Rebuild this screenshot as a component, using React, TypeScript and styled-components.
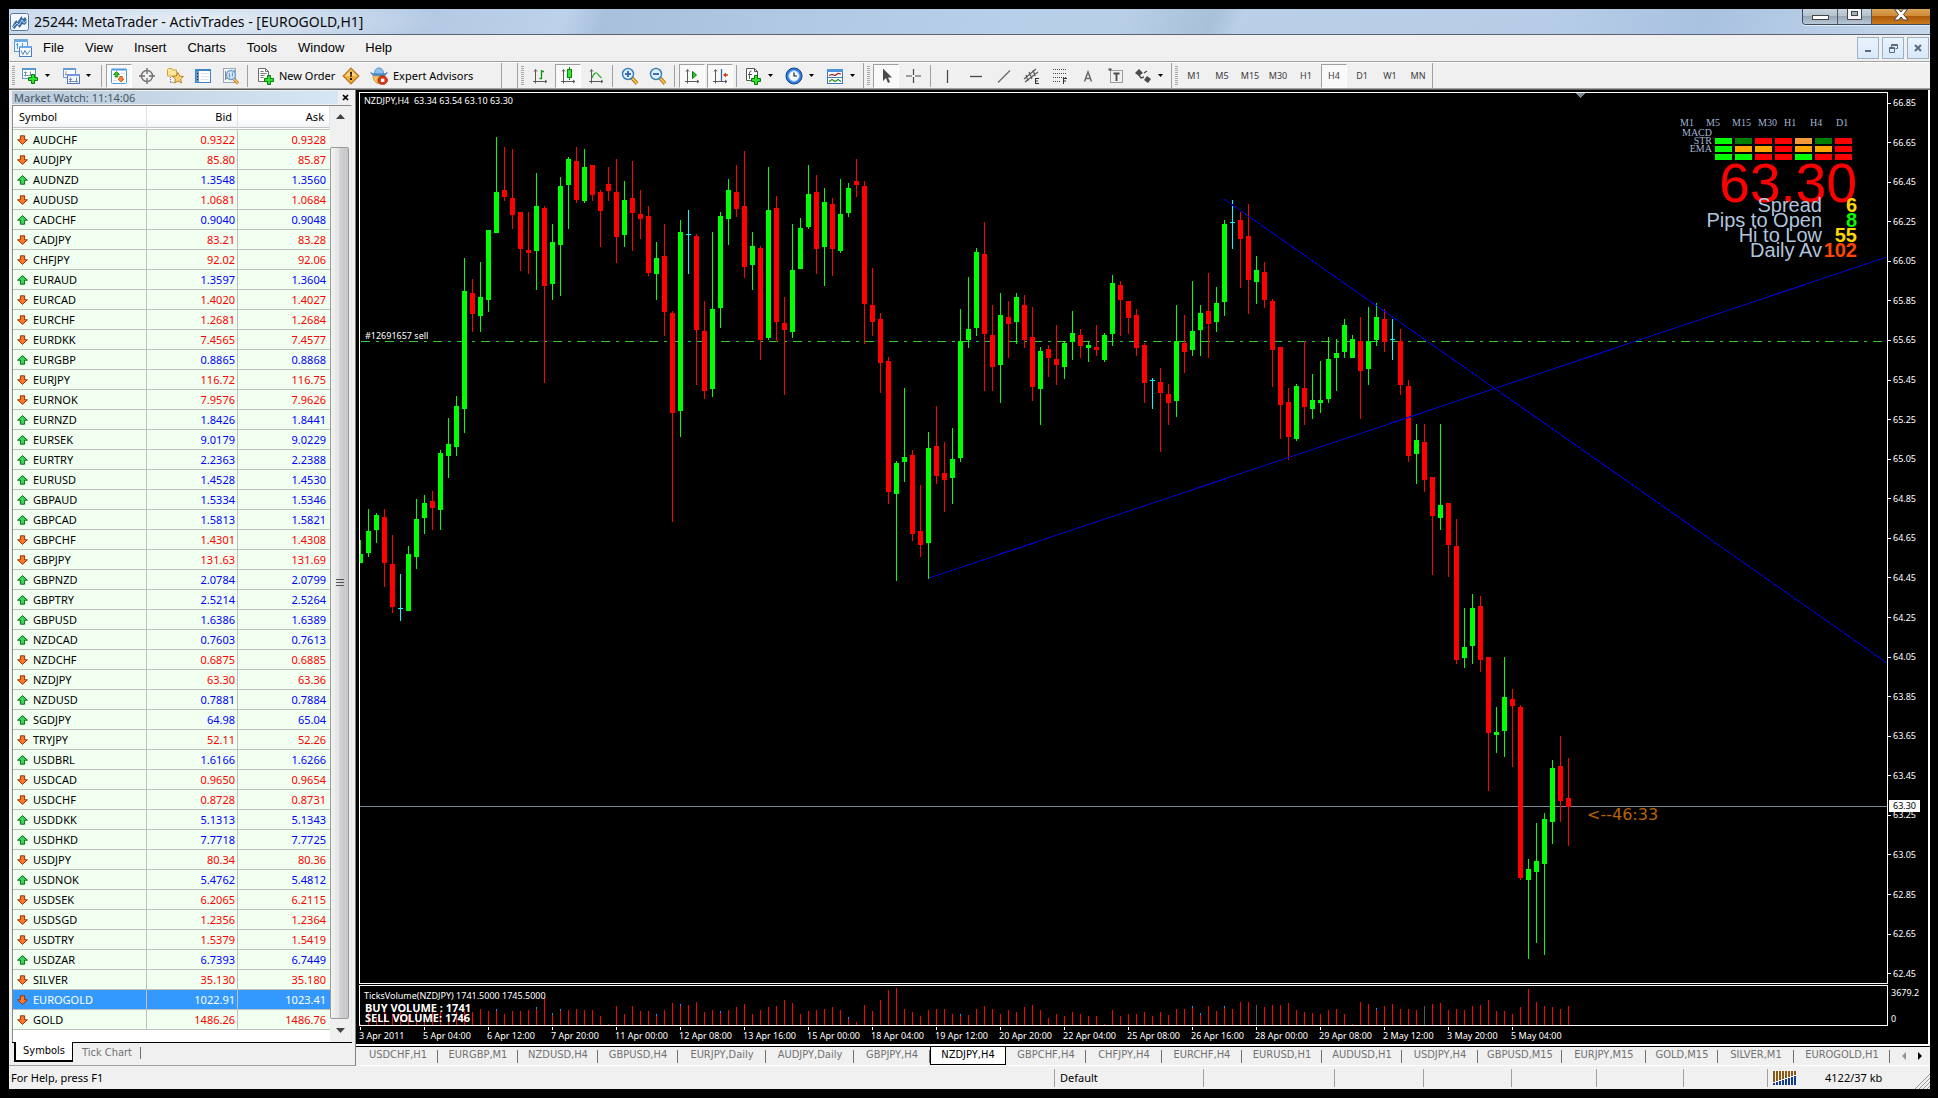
import React from "react";
import styled, { createGlobalStyle, css } from "styled-components";

const UI = `"Noto Sans", "Open Sans", sans-serif`;
const COND = `"DejaVu Sans Condensed", "Noto Sans", sans-serif`;
const ARIAL = `"Liberation Sans", Arial, sans-serif`;
const FACE = "#f0f0f0";
const SHADE = "#a0a0a0";

const GlobalStyle = createGlobalStyle`
  * { box-sizing: border-box; }
  body { margin: 0; background: #000; font-family: ${UI}; font-size: 11px; color: #000; }
  button { font: inherit; color: inherit; background: none; border: 0; padding: 0; margin: 0; }
`;

/* ---------- window frame ---------- */

const Screen = styled.div`
  min-height: 100vh;
  display: flex;
  padding: 9px 8px 9px 9px;
`;
const AppWindow = styled.main`
  flex: 1;
  min-width: 0;
  display: flex;
  flex-direction: column;
  background: ${FACE};
`;
const TitleBar = styled.header`
  height: 26px;
  display: flex;
  align-items: center;
  padding-left: 1px;
  gap: 5px;
  border-bottom: 1px solid #5b6472;
  background:
    radial-gradient(ellipse 240px 30px at 190px 12px, rgba(255, 255, 255, 0.65), rgba(255, 255, 255, 0) 100%),
    linear-gradient(110deg, #c3d5ea 0, #b4cae4 22%, #bcd1ea 29%, #a9c0dc 31%, #b1c8e3 40%, #b8cfe9 52%,
      #b9cfe8 58%, #a9c0d9 62.5%, #bacfe8 64%, #b7cde7 80%, #a9c2e0 88%, #c5d7eb 100%);
`;
const TitleText = styled.h1`
  flex: 1;
  margin: 0;
  font: 400 14px/20px ${UI};
  color: #0a0a0a;
`;
const Captions = styled.div`
  align-self: flex-start;
  display: flex;
  height: 16px;
  border: 1px solid #3d4a5c;
  border-top: 0;
  border-right: 0;
  border-radius: 0 0 0 4px;
  overflow: hidden;
  box-shadow: 0 1px 0 #e4eefa;
`;
const Caption = styled.button<{ $w: number; $close?: boolean }>`
  width: ${(p) => p.$w}px;
  display: flex;
  justify-content: center;
  border-right: 1px solid ${(p) => (p.$close ? "transparent" : "#4d5a6c")};
  background: ${(p) =>
    p.$close
      ? "linear-gradient(#d9a45a 0, #d08a35 45%, #ad5a08 50%, #c97a1c 100%)"
      : "linear-gradient(#c6d2de 0, #b4c3cf 45%, #95a7b5 50%, #b9c8d8 100%)"};
`;

const MenuBar = styled.nav`
  height: 27px;
  display: flex;
  align-items: center;
  padding: 0 1px 0 4px;
  border-bottom: 1px solid ${SHADE};
`;
const MenuItem = styled.button`
  padding: 0 11px 0 10px;
  font: 400 13px/20px ${ARIAL};
`;
const MdiButtons = styled.div`
  margin-left: auto;
  display: flex;
  gap: 3px;
`;
const MdiButton = styled.button`
  width: 22px;
  height: 22px;
  display: grid;
  place-items: center;
  border: 1px solid #9fb0c2;
  background: linear-gradient(#e9f3fd, #d9e9f9);
`;

/* ---------- toolbar ---------- */

const ToolBar = styled.div`
  height: 27px;
  display: flex;
  border-top: 1px solid #fff;
  border-bottom: 1px solid ${SHADE};
`;
const ToolGroup = styled.div<{ $w?: number; $left?: boolean }>`
  display: flex;
  align-items: center;
  ${(p) => p.$w && css`min-width: ${p.$w}px;`}
  ${(p) => p.$left && css`margin-left: 15px; border-left: 1px solid ${SHADE};`}
  border-right: 1px solid ${SHADE};
`;
const Grip = styled.i`
  width: 8px;
  height: 20px;
  background: repeating-linear-gradient(#a8a8a8 0 1px, transparent 1px 2px) 3px 0 / 3px 20px no-repeat;
`;
const Divider = styled.i`
  width: 6px;
  height: 22px;
  background: linear-gradient(${SHADE}, ${SHADE}) 2px 0 / 1px 22px no-repeat;
`;
const Tool = styled.button<{ $pressed?: boolean; $menu?: boolean }>`
  width: ${(p) => (p.$menu ? 41 : 28)}px;
  height: 24px;
  display: flex;
  align-items: center;
  justify-content: ${(p) => (p.$menu ? "flex-start" : "center")};
  gap: 6px;
  padding-left: ${(p) => (p.$menu ? 4 : 0)}px;
  font: 400 9px/12px ${UI};
  color: #3c3c3c;
  ${(p) =>
    p.$pressed &&
    css`
      width: 26px;
      margin: 0 1px;
      background: #f9f9f9;
      border: 1px solid;
      border-color: ${SHADE} #fff #fff ${SHADE};
    `}
`;
const TextTool = styled.button<{ $w: number }>`
  min-width: ${(p) => p.$w}px;
  display: flex;
  align-items: center;
  gap: 5px;
  padding-left: 5px;
  font: 400 11px/14px ${UI};
  white-space: nowrap;
`;

const Icon = ({ children }: { children: React.ReactNode }) => (
  <svg width="18" height="18" viewBox="0 0 18 18" fill="none" aria-hidden="true">
    {children}
  </svg>
);
const Caret = () => (
  <svg width="5" height="3" viewBox="0 0 5 3" aria-hidden="true">
    <path d="M0 0h5L2.500 3z" fill="#000" />
  </svg>
);
const Axes = () => <path d="M4.500 3v13.500M2 14.500h14M3 4.500l1.500-2 1.500 2M14 13l2 1.500-2 1.500" stroke="#5a5a5a" />;
const Plus = ({ x, y }: { x: number; y: number }) => (
  <path
    transform={`translate(${x} ${y})`}
    d="M3.500.5h3v3h3v3h-3v3h-3v-3h-3v-3h3z"
    fill="#2fe02f"
    stroke="#0a7a0a"
  />
);

const icons = {
  newChart: (
    <Icon>
      <rect x="1.500" y="1.500" width="13" height="10" fill="#fdfdff" stroke="#5c97cf" />
      <path d="M1 2h14" stroke="#5c97cf" strokeWidth="2" />
      <path d="M4.500 4.500v5M3 8.500h9M3 5.500h3M9.500 4.500v4" stroke="#8090a0" />
      <Plus x={7} y={7} />
    </Icon>
  ),
  profiles: (
    <Icon>
      <rect x="1.500" y="1.500" width="12" height="9" fill="#fdfdff" stroke="#6b9bd2" />
      <path d="M1 2h13" stroke="#6b9bd2" strokeWidth="2" />
      <path d="M4 4v5M3 7.500h7" stroke="#90a0b0" />
      <rect x="5.500" y="7.500" width="12" height="9" fill="#f2f5fc" stroke="#5577bb" />
      <path d="M5 8h13" stroke="#6f97d6" strokeWidth="2" />
      <path d="M7 14.500h9M8.500 10.500v5M7 12.500h3M14.500 10.500v5" stroke="#7a8aaa" />
    </Icon>
  ),
  marketWatch: (
    <Icon>
      <rect x="1.500" y="2.500" width="15" height="14" rx="1" fill="#fff" stroke="#4d9be0" />
      <path d="M1.500 2.500h15" stroke="#4d9be0" strokeWidth="2" />
      <path d="M6.500 4.500l3 3H7.800v2.500H5.200V7.500H3.500z" fill="#35c835" stroke="#0a7a0a" strokeWidth=".8" />
      <path d="M11 15l3-3h-1.700V9.500H9.700V12H8z" fill="#ff9030" stroke="#d04800" strokeWidth=".8" />
      <path d="M11 6.500h4M3.500 13.500h3" stroke="#d4dde6" />
    </Icon>
  ),
  dataWindow: (
    <Icon>
      <circle cx="9" cy="9" r="5.500" stroke="#707070" strokeWidth="1.400" />
      <path d="M9 1v6M9 11v6M1 9h6M11 9h6" stroke="#707070" strokeWidth="1.400" />
    </Icon>
  ),
  navigator: (
    <Icon>
      <path d="M1.500 2.500l1-1h3l1 1.500h4v6h-9z" fill="#ffe79a" stroke="#d0a040" />
      <path d="M4.500 10v6M4.500 15.500h3" stroke="#777" strokeDasharray="1 1" />
      <path d="M12 5.500l1.700 3.600 3.800.4-2.900 2.600.9 3.900-3.500-2-3.400 2 .9-3.900-2.900-2.600 3.700-.4z" fill="#ffd070" stroke="#b07a20" strokeWidth=".9" />
    </Icon>
  ),
  terminal: (
    <Icon>
      <rect x="1.500" y="2.500" width="15" height="13" fill="#fff" stroke="#3f86c8" />
      <path d="M1 3h16" stroke="#3f86c8" strokeWidth="2" />
      <rect x="2" y="4" width="3" height="11" fill="#6a94c8" />
      <path d="M3 6.500h1M3 9.500h1M3 12.500h1" stroke="#123" />
      <path d="M7 6.500h8M7 9.500h8M7 12.500h8" stroke="#dce6f0" />
    </Icon>
  ),
  tester: (
    <Icon>
      <rect x="1.500" y="1.500" width="12" height="14" fill="#f4f6f8" stroke="#a0a8b0" />
      <path d="M3.500 4v9M3 11.500h5M12.500 3v3" stroke="#889" />
      <path d="M12 12l4 4.500" stroke="#a87018" strokeWidth="3" />
      <path d="M12 12l4 4.500" stroke="#ffc860" strokeWidth="1.600" />
      <circle cx="9" cy="8" r="4.500" fill="#cfe6f8" stroke="#6aa0d0" strokeWidth="1.300" />
      <path d="M7.500 6v4.500M10.500 5.500v4M6.500 9h2" stroke="#7a9ab8" />
    </Icon>
  ),
  newOrder: (
    <Icon>
      <path d="M2.500 1.500h7l3 3v10h-10z" fill="#fff" stroke="#6a6a6a" />
      <path d="M9.500 1.500v3h3M4.500 4.500h3M4.500 6.500h6M4.500 8.500h4M4.500 10.500h3" stroke="#777" />
      <Plus x={8} y={8} />
    </Icon>
  ),
  metaEditor: (
    <Icon>
      <path d="M9 1.200L16.800 9 9 16.800 1.200 9z" fill="#f3ac38" stroke="#b47a20" strokeWidth="1.200" />
      <path d="M9 3L15 9H3z" fill="#ffd68a" />
      <path d="M8 4.800h2L9.600 10H8.400zM8 11h2v2H8z" fill="#221505" />
    </Icon>
  ),
  expert: (
    <Icon>
      <path d="M3 8c0 6 3 8.500 6 8.500S15 14 15 8z" fill="#f6c65a" stroke="#b8862a" strokeWidth=".8" />
      <path d="M4.500 7C4.500 3 6.500 1 9 1s4.500 2 4.500 6z" fill="#8cc4ee" stroke="#3a7ab8" strokeWidth=".8" />
      <path d="M.8 5.500C3 8 15 8 17.200 5.500 17 10 1 10 .8 5.500z" fill="#5fa6e0" stroke="#3a7ab8" strokeWidth=".8" />
      <path d="M10.600 9h4l2.700 2.700v3l-2.700 2.600h-4L8 14.700v-3z" fill="#e03818" stroke="#901800" strokeWidth=".7" />
      <rect x="11" y="11.700" width="3.300" height="3.300" fill="#fff" />
    </Icon>
  ),
  bars: (
    <Icon>
      <Axes />
      <path d="M8.500 11.500h2M10.500 3v9M10.500 4.500H13" stroke="#0a9a0a" strokeWidth="1.300" />
    </Icon>
  ),
  candles: (
    <Icon>
      <Axes />
      <path d="M10.500 0v13" stroke="#0a7a0a" />
      <rect x="8.500" y="2.500" width="4" height="8" fill="#3ce03c" stroke="#0a8a0a" />
    </Icon>
  ),
  line: (
    <Icon>
      <Axes />
      <path d="M5 11c2-6 4.500-6 6-3.500l3.500 3.500" stroke="#3cb03c" strokeWidth="1.300" />
    </Icon>
  ),
  zoomIn: (
    <Icon>
      <path d="M10.500 10.500l5.500 6" stroke="#8a5a10" strokeWidth="3.400" />
      <path d="M10.500 10.500l5.500 6" stroke="#ffc040" strokeWidth="2" />
      <circle cx="7" cy="7" r="5.500" fill="#e2f2fc" stroke="#3a84bc" strokeWidth="1.500" />
      <path d="M7 4v6M4 7h6" stroke="#3c6cc0" strokeWidth="2" />
    </Icon>
  ),
  zoomOut: (
    <Icon>
      <path d="M10.500 10.500l5.500 6" stroke="#8a5a10" strokeWidth="3.400" />
      <path d="M10.500 10.500l5.500 6" stroke="#ffc040" strokeWidth="2" />
      <circle cx="7" cy="7" r="5.500" fill="#e2f2fc" stroke="#3a84bc" strokeWidth="1.500" />
      <path d="M4 7h6" stroke="#3c6cc0" strokeWidth="2" />
    </Icon>
  ),
  autoScroll: (
    <Icon>
      <Axes />
      <path d="M9.500 4.500l4 3.500-4 3.500z" fill="#28c828" stroke="#0a7a0a" />
    </Icon>
  ),
  chartShift: (
    <Icon>
      <Axes />
      <path d="M10.500 2v12" stroke="#2a6ab0" strokeWidth="1.300" />
      <path d="M12 8l3-2.500v1.800h2v1.400h-2v1.800z" fill="#c84010" />
    </Icon>
  ),
  indicators: (
    <Icon>
      <path d="M2.500 1.500h8l3 3v9h-11z" fill="#fff" stroke="#555" />
      <path d="M10.500 1.500v3h3M7.500 4q-2 0-2 2v6M4 7.500h4" stroke="#555" />
      <Plus x={7} y={8} />
    </Icon>
  ),
  periods: (
    <Icon>
      <circle cx="9" cy="9" r="8" fill="#2f7cd8" stroke="#123f88" />
      <circle cx="9" cy="9" r="5.400" fill="#f4f9ff" stroke="#7ab4f0" />
      <path d="M9 5.500V9h3" stroke="#222" strokeWidth="1.200" />
    </Icon>
  ),
  templates: (
    <Icon>
      <rect x="1.500" y="2.500" width="15" height="14" fill="#fff" stroke="#3a7abc" />
      <path d="M1 3.500h16" stroke="#4a94dc" strokeWidth="3" />
      <path d="M2 10.500h14" stroke="#3a7abc" />
      <path d="M3 8.500l3-1 3 1 3-2 3 .5" stroke="#a02020" strokeWidth="1.200" />
      <path d="M3 14.500l3-2 3 2 3-2 3 2" stroke="#209020" strokeWidth="1.200" />
    </Icon>
  ),
  cursor: (
    <Icon>
      <path d="M6 1.500v12.500l3-3 2 5 2-1-2-4.500h4z" fill="#4a4a4a" />
    </Icon>
  ),
  crosshair: (
    <Icon>
      <path d="M8.500 2v6M8.500 10v6M1 9h6M10 9h6" stroke="#4a4a4a" strokeWidth="1.200" />
    </Icon>
  ),
  vline: (
    <Icon>
      <path d="M8.500 3v13" stroke="#4a4a4a" strokeWidth="1.300" />
    </Icon>
  ),
  hline: (
    <Icon>
      <path d="M3 9.500h12" stroke="#4a4a4a" strokeWidth="1.300" />
    </Icon>
  ),
  trend: (
    <Icon>
      <path d="M3 15.500L15 3.500" stroke="#6a6a6a" strokeWidth="1.300" />
    </Icon>
  ),
  channel: (
    <Icon>
      <path d="M1 12L13 2M2 15L15 5M3 8l2 6M6 5l3 7M10 3l2 6" stroke="#5a5a5a" strokeWidth="1.200" />
      <path d="M12 11.500h4M12 14h3M12 16.500h4M12.500 11v6" stroke="#333" />
    </Icon>
  ),
  fibo: (
    <Icon>
      <path d="M2 2.500h14M2 6.500h14M2 10.500h14M2 14.500h8" stroke="#4a4a4a" strokeDasharray="1 1" />
      <path d="M12.500 11v6M12 11.500h4M12 14h3" stroke="#333" />
    </Icon>
  ),
  text: (
    <Icon>
      <path d="M5.500 14.500L9 5l3.500 9.500M6.500 11.500h5" stroke="#6a6a6a" strokeWidth="1.500" />
    </Icon>
  ),
  label: (
    <Icon>
      <rect x="3.500" y="3.500" width="12" height="12" stroke="#4a4a4a" strokeDasharray="1 1" />
      <path d="M6.500 6.500h6M9.500 6v8" stroke="#4a4a4a" strokeWidth="1.800" />
      <path d="M1.500 2.500h3" stroke="#4a4a4a" strokeWidth="2" />
    </Icon>
  ),
  arrows: (
    <Icon>
      <path d="M1 6l4-4 4 4-4 3zM10 13l3-4 4 3-3 4z" fill="#4a4a4a" />
      <path d="M5 8l2 3 3-1M10 6l3-2" stroke="#4a4a4a" strokeWidth="1.400" />
    </Icon>
  ),
};

type ToolSpec = { icon: keyof typeof icons; label: string; pressed?: boolean; menu?: boolean };
const ToolButton = ({ icon, label, pressed, menu }: ToolSpec) => (
  <Tool aria-label={label} aria-pressed={pressed} $pressed={pressed} $menu={menu}>
    {icons[icon]}
    {menu && <Caret />}
  </Tool>
);

/* ---------- workspace ---------- */

const Workspace = styled.div`
  flex: 1;
  display: grid;
  grid-template-columns: 346px minmax(0, 1fr);
  border-top: 1px solid #606060;
`;

/* ---------- market watch ---------- */

const MarketPanel = styled.section`
  display: flex;
  flex-direction: column;
  padding: 0 3px 3px 3px;
  border-bottom: 1px solid ${SHADE};
`;
const PanelTitle = styled.div`
  height: 14px;
  display: flex;
  align-items: center;
  margin-bottom: 1px;
`;
const PanelName = styled.h2`
  flex: 1;
  margin: 0;
  padding-left: 2px;
  font: 400 11px/13px ${UI};
  color: #45555f;
  background: linear-gradient(90deg, #b9cadb, #d7e6f5);
`;
const PanelClose = styled.button`
  width: 14px;
  height: 14px;
  display: grid;
  place-items: center;
`;
const ListBox = styled.div`
  flex: 1;
  display: flex;
  align-items: stretch;
  background: #fff;
  border: 1px solid #8a8a8a;
  border-right-color: #e8e8e8;
  border-bottom: 0;
`;
const Quotes = styled.table`
  flex: none;
  align-self: flex-start;
  width: 317px;
  table-layout: fixed;
  border-collapse: separate;
  border-spacing: 0;
  font: 400 11px/16px ${UI};
`;
const HeadCell = styled.th<{ $w: number; $right?: boolean }>`
  width: ${(p) => p.$w}px;
  height: 24px;
  padding: 0 5px 0 6px;
  font-weight: 400;
  text-align: ${(p) => (p.$right ? "right" : "left")};
  background: linear-gradient(#fff 60%, #f2f4f6);
  border-right: 1px solid #dfe3e8;
  border-bottom: 3px double #c4c4c4;
`;
const QuoteRow = styled.tr<{ $up: boolean; $selected?: boolean }>`
  color: ${(p) => (p.$selected ? "#fff" : p.$up ? "#0000ff" : "#ff0000")};
  background: ${(p) => (p.$selected ? "#3399ff" : "#f0fff0")};
  & > th { color: ${(p) => (p.$selected ? "#fff" : "#000")}; }
`;
const SymbolCell = styled.th`
  height: 20px;
  padding: 0 0 0 4px;
  font-weight: 400;
  text-align: left;
  border-right: 1px solid #c0c0c0;
  border-bottom: 1px solid #c0c0c0;
`;
const SymbolName = styled.span`
  display: flex;
  align-items: center;
  gap: 5px;
`;
const PriceCell = styled.td`
  padding: 0 2px 0 0;
  text-align: right;
  border-right: 1px solid #c0c0c0;
  border-bottom: 1px solid #c0c0c0;
  &:last-child { border-right: 0; padding-right: 4px; }
`;
const ScrollBar = styled.div`
  flex: 1;
  display: flex;
  flex-direction: column;
  background: #f0f0f0;
`;
const ScrollArrow = styled.button<{ $h: number; $down?: boolean }>`
  height: ${(p) => p.$h}px;
  display: flex;
  justify-content: center;
  align-items: ${(p) => (p.$down ? "center" : "flex-start")};
  padding-top: ${(p) => (p.$down ? 0 : 8)}px;
`;
const Thumb = styled.div`
  flex: 1;
  display: grid;
  place-items: center;
  margin-right: 2px;
  border: 1px solid #9a9a9a;
  border-radius: 2px;
  background: linear-gradient(90deg, #f4f4f4, #e2e2e4 45%, #cfd0d3 55%, #c6c7ca);
`;
const SheetTabs = styled.div`
  height: 20px;
  display: flex;
  align-items: stretch;
  padding-left: 2px;
  border-top: 1px solid #000;
  font: 400 11px/14px ${COND};
`;
const SheetTab = styled.button<{ $active?: boolean }>`
  padding: 0 9px;
  color: #707070;
  ${(p) =>
    p.$active
      ? css`
          margin-top: -1px;
          padding: 0 7px;
          color: #000;
          background: #fff;
          border: solid #000;
          border-width: 0 1px 2px 2px;
        `
      : css`
          background: linear-gradient(#707070, #707070) 100% 50% / 1px 12px no-repeat;
        `}
`;

const DirectionIcon = ({ up }: { up: boolean }) => (
  <svg width="11" height="10" viewBox="0 0 11 10" aria-label={up ? "up" : "down"}>
    <path
      d={up ? "M5.500.6L10.400 5.200H7.600V9.200H3.400V5.200H.6z" : "M5.500 9.400L.6 4.800H3.400V.8H7.600V4.800H10.400z"}
      fill={up ? "#3ad45a" : "#ff7a28"}
      stroke={up ? "#0a6a1a" : "#9a3008"}
      strokeWidth="1"
    />
  </svg>
);

const quotes: [string, string, string, boolean][] = [
  ["AUDCHF", "0.9322", "0.9328", false],
  ["AUDJPY", "85.80", "85.87", false],
  ["AUDNZD", "1.3548", "1.3560", true],
  ["AUDUSD", "1.0681", "1.0684", false],
  ["CADCHF", "0.9040", "0.9048", true],
  ["CADJPY", "83.21", "83.28", false],
  ["CHFJPY", "92.02", "92.06", false],
  ["EURAUD", "1.3597", "1.3604", true],
  ["EURCAD", "1.4020", "1.4027", false],
  ["EURCHF", "1.2681", "1.2684", false],
  ["EURDKK", "7.4565", "7.4577", false],
  ["EURGBP", "0.8865", "0.8868", true],
  ["EURJPY", "116.72", "116.75", false],
  ["EURNOK", "7.9576", "7.9626", false],
  ["EURNZD", "1.8426", "1.8441", true],
  ["EURSEK", "9.0179", "9.0229", true],
  ["EURTRY", "2.2363", "2.2388", true],
  ["EURUSD", "1.4528", "1.4530", true],
  ["GBPAUD", "1.5334", "1.5346", true],
  ["GBPCAD", "1.5813", "1.5821", true],
  ["GBPCHF", "1.4301", "1.4308", false],
  ["GBPJPY", "131.63", "131.69", false],
  ["GBPNZD", "2.0784", "2.0799", true],
  ["GBPTRY", "2.5214", "2.5264", true],
  ["GBPUSD", "1.6386", "1.6389", true],
  ["NZDCAD", "0.7603", "0.7613", true],
  ["NZDCHF", "0.6875", "0.6885", false],
  ["NZDJPY", "63.30", "63.36", false],
  ["NZDUSD", "0.7881", "0.7884", true],
  ["SGDJPY", "64.98", "65.04", true],
  ["TRYJPY", "52.11", "52.26", false],
  ["USDBRL", "1.6166", "1.6266", true],
  ["USDCAD", "0.9650", "0.9654", false],
  ["USDCHF", "0.8728", "0.8731", false],
  ["USDDKK", "5.1313", "5.1343", true],
  ["USDHKD", "7.7718", "7.7725", true],
  ["USDJPY", "80.34", "80.36", false],
  ["USDNOK", "5.4762", "5.4812", true],
  ["USDSEK", "6.2065", "6.2115", false],
  ["USDSGD", "1.2356", "1.2364", false],
  ["USDTRY", "1.5379", "1.5419", false],
  ["USDZAR", "6.7393", "6.7449", true],
  ["SILVER", "35.130", "35.180", false],
  ["EUROGOLD", "1022.91", "1023.41", false],
  ["GOLD", "1486.26", "1486.76", false],
];

/* ---------- chart ---------- */

const ChartColumn = styled.section`
  display: flex;
  flex-direction: column;
  min-width: 0;
  border-left: 1px solid #808080;
`;
const ChartWindow = styled.div`
  flex: 1;
  display: grid;
  grid-template-columns: minmax(0, 1fr) 40px;
  grid-template-rows: 1fr 41px 17px;
  row-gap: 1px;
  padding: 2px 0 0 3px;
  background: #000;
  border-right: 2px solid #fff;
  border-bottom: 2px solid #fff;
  color: #fff;
`;
const Plot = styled.div`
  position: relative;
  min-width: 0;
  border: 1px solid #fff;
`;
const Drawing = styled.svg`
  position: absolute;
  inset: 0;
  width: 100%;
  height: 100%;
  overflow: hidden;
`;
const Small = styled.text`
  font: 400 9px ${UI};
  fill: #fff;
`;
const Bold = styled.text`
  font: 700 11px ${UI};
  fill: #fff;
`;
const Countdown = styled.text`
  font: 400 16px "DejaVu Sans", sans-serif;
  fill: #b86400;
`;
const PriceAxis = styled.div`
  position: relative;
  display: flex;
  flex-direction: column;
  justify-content: space-between;
  padding: 5px 0 4px;
  font: 400 9px/12px ${UI};
`;
const AxisLabel = styled.span`
  display: flex;
  align-items: center;
  gap: 2px;
  &::before { content: ""; width: 3px; height: 1px; background: #fff; }
`;
const PriceBadge = styled.span`
  position: absolute;
  left: 1px;
  top: 708px;
  width: 31px;
  padding-left: 4px;
  line-height: 12px;
  color: #000;
  background: #fff;
`;
const VolumeAxis = styled.div`
  display: flex;
  flex-direction: column;
  justify-content: space-between;
  padding: 2px 0 1px 3px;
  font: 400 9px/12px ${UI};
`;
const DateAxis = styled.div`
  grid-column: 1 / -1;
  display: grid;
  grid-auto-flow: column;
  grid-auto-columns: 64px;
  overflow: hidden;
  font: 400 9px/13px ${UI};
  white-space: nowrap;
`;
const DateLabel = styled.span`
  padding-top: 2px;
  background: linear-gradient(#fff, #fff) 1px 0 / 1px 3px no-repeat;
`;

const Panel = styled.div`
  position: absolute;
  top: 24px;
  right: 30px;
  width: 177px;
`;
const Frames = styled.div`
  display: grid;
  grid-template-columns: repeat(7, 26px);
  font: 400 10px/12px "Liberation Serif", serif;
  color: #a3b5d6;
`;
const Heat = styled.div`
  display: grid;
  grid-template-columns: 32px 1fr;
  column-gap: 3px;
  height: 31px;
  font: 400 10px/8px "Liberation Serif", serif;
  color: #a3b5d6;
  text-align: right;
`;
const HeatNames = styled.div`
  display: flex;
  flex-direction: column;
`;
const HeatCells = styled.div`
  display: grid;
  grid-template-columns: repeat(7, 17px);
  grid-auto-rows: 6px;
  gap: 2px 3px;
  padding-top: 9px;
`;
const Cell = styled.i<{ $c: string }>`
  background: ${(p) => p.$c};
`;
const BigPrice = styled.div`
  height: 38px;
  font: 400 55px/46px ${ARIAL};
  text-align: right;
  color: #ff0000;
`;
const Stats = styled.dl`
  position: relative;
  margin: 0;
  display: grid;
  grid-template-columns: 1fr 35px;
  font: 400 20px/15px ${ARIAL};
  text-align: right;
`;
const StatName = styled.dt`
  color: #b0c4de;
`;
const StatValue = styled.dd<{ $c: string }>`
  margin: 0;
  font-size: 20px;
  font-weight: 700;
  color: ${(p) => p.$c};
`;

const LIME = "#00ff00";
const RED = "#ff0000";
const ORANGE = "#ffa500";
const GREEN = "#008000";
const heat = [
  [LIME, GREEN, RED, RED, "#f79a3c", GREEN, RED],
  [LIME, ORANGE, ORANGE, RED, ORANGE, ORANGE, RED],
  [LIME, LIME, RED, RED, LIME, RED, RED],
];

const BAR = 8;
type Bar = [string, number, number, number, number];
/* kind, high, body top, body bottom, low – measured in units of the run's scale */
const runs: { top: number; scale: number; bars: Bar[] }[] = [
  {
    top: -3,
    scale: 540 / 1568,
    bars: [
      ["g", 1307, 1347, 1373, 1373], ["g", 1217, 1281, 1344, 1356], ["g", 1228, 1234, 1278, 1315],
      ["r", 1217, 1240, 1373, 1443], ["r", 1292, 1376, 1501, 1519], ["c", 1405, 1505, 1505, 1542],
      ["g", 1324, 1347, 1513, 1513], ["g", 1188, 1246, 1356, 1391], ["g", 1176, 1199, 1243, 1289],
      ["r", 1164, 1193, 1214, 1278], ["g", 1045, 1054, 1220, 1278], ["g", 952, 1028, 1063, 1127],
      ["g", 889, 918, 1037, 1063], ["g", 488, 584, 926, 996], ["r", 549, 589, 650, 703],
      ["g", 499, 601, 656, 703], ["g", 407, 407, 610, 645], ["g", 136, 296, 415, 415],
      ["r", 166, 290, 311, 322], ["r", 171, 314, 363, 404], ["r", 354, 354, 462, 526],
      ["r", 354, 465, 473, 534], ["g", 241, 337, 467, 581], ["r", 337, 343, 570, 851],
      ["g", 389, 441, 563, 610], ["g", 253, 279, 450, 598], ["g", 195, 200, 276, 404],
      ["r", 166, 206, 318, 328], ["g", 171, 224, 322, 328], ["r", 218, 218, 305, 322],
      ["r", 290, 296, 351, 456], ["r", 224, 273, 293, 322], ["r", 200, 296, 427, 502],
      ["g", 264, 319, 421, 456], ["r", 206, 314, 357, 467], ["r", 290, 360, 375, 433],
      ["r", 337, 366, 531, 540], ["g", 441, 488, 534, 610], ["r", 389, 482, 645, 714],
      ["r", 642, 648, 938, 1254], ["g", 377, 412, 932, 1008], ["c", 348, 419, 419, 534],
      ["r", 418, 424, 697, 857], ["r", 613, 700, 874, 897], ["g", 412, 636, 868, 891],
      ["g", 354, 366, 633, 691], ["g", 258, 290, 375, 450], ["r", 218, 296, 346, 369],
      ["r", 177, 337, 514, 546], ["g", 412, 453, 508, 581], ["r", 453, 459, 726, 784],
      ["g", 224, 348, 720, 726], ["r", 308, 343, 674, 732], ["r", 601, 677, 697, 886],
      ["g", 389, 523, 703, 720], ["g", 372, 401, 520, 520], ["g", 218, 302, 398, 404],
      ["r", 247, 296, 462, 534], ["g", 285, 325, 456, 570], ["r", 314, 331, 462, 540],
      ["g", 258, 360, 467, 473], ["g", 270, 285, 357, 369], ["r", 200, 264, 276, 311],
      ["r", 264, 279, 621, 738], ["r", 517, 624, 674, 714], ["r", 648, 665, 793, 880],
      ["r", 775, 787, 1167, 1202], ["g", 1077, 1083, 1173, 1426], ["g", 865, 1066, 1080, 1138],
      ["r", 1045, 1060, 1289, 1310], ["r", 1147, 1281, 1321, 1356], ["g", 993, 1040, 1315, 1420],
      ["r", 918, 1034, 1121, 1144], ["r", 1022, 1112, 1132, 1225], ["g", 981, 1071, 1127, 1202],
      ["g", 636, 729, 1069, 1080], ["g", 543, 694, 726, 749], ["g", 459, 470, 691, 714],
      ["r", 383, 476, 709, 874], ["r", 624, 711, 804, 874], ["g", 589, 653, 799, 909],
      ["r", 613, 659, 679, 778], ["g", 589, 601, 674, 738], ["r", 595, 624, 726, 749],
      ["r", 630, 717, 862, 903], ["g", 746, 758, 868, 973], ["r", 740, 752, 778, 833],
      ["r", 682, 781, 799, 857], ["g", 729, 735, 804, 839], ["g", 642, 706, 732, 784],
      ["r", 694, 711, 743, 778], ["g", 729, 740, 749, 790], ["r", 682, 746, 755, 772],
      ["g", 706, 711, 784, 790], ["g", 537, 560, 709, 743], ["r", 555, 566, 610, 714],
      ["r", 613, 613, 662, 709], ["r", 636, 653, 749, 772],
    ],
  },
  {
    top: 87,
    scale: 1 / 3,
    bars: [
      ["r", 489, 495, 609, 669], ["c", 594, 601, 601, 687], ["r", 564, 606, 639, 816],
      ["r", 612, 642, 669, 735], ["g", 375, 483, 663, 711], ["r", 405, 489, 516, 579],
      ["g", 303, 453, 510, 528], ["g", 375, 399, 450, 528], ["r", 279, 393, 432, 534],
      ["g", 321, 369, 426, 456], ["g", 120, 132, 366, 408], ["c", 60, 127, 127, 207],
      ["r", 96, 120, 177, 324], ["r", 72, 168, 300, 402], ["g", 228, 270, 306, 372],
      ["r", 246, 276, 360, 384], ["r", 357, 363, 510, 621], ["r", 501, 501, 675, 777],
      ["r", 624, 666, 771, 840], ["g", 612, 618, 777, 783], ["r", 483, 624, 681, 735],
      ["g", 582, 660, 687, 717], ["g", 543, 660, 669, 699], ["g", 471, 537, 657, 669],
      ["g", 477, 519, 534, 633], ["g", 417, 435, 516, 534], ["g", 465, 477, 534, 534],
      ["r", 411, 483, 573, 717], ["g", 381, 483, 567, 615], ["g", 369, 411, 480, 498],
      ["r", 387, 417, 486, 516], ["c", 417, 478, 478, 540], ["r", 447, 483, 615, 645],
      ["r", 600, 618, 828, 846], ["g", 732, 780, 822, 912], ["r", 732, 786, 900, 936],
      ["r", 891, 891, 1008, 1185], ["g", 732, 975, 1014, 1050], ["r", 969, 969, 1095, 1191],
      ["r", 1017, 1098, 1440, 1452],
    ],
  },
  {
    top: 427,
    scale: 1 / 3,
    bars: [
      ["g", 264, 381, 414, 444], ["g", 222, 264, 378, 432], ["r", 228, 258, 420, 456],
      ["r", 411, 411, 639, 813], ["g", 561, 636, 645, 699], ["g", 411, 531, 633, 711],
      ["r", 507, 537, 558, 741], ["r", 555, 561, 1074, 1080], ["g", 1017, 1047, 1080, 1317],
      ["g", 909, 1023, 1056, 1269], ["g", 879, 897, 1032, 1305], ["g", 720, 744, 906, 972],
      ["r", 648, 738, 843, 906], ["r", 714, 834, 861, 978],
    ],
  },
];
const candles = runs.flatMap(({ top, scale, bars }) =>
  bars.map(([kind, ...levels]) => ({ kind, levels: levels.map((v) => Math.round(top + v * scale)) }))
);
const tone: Record<string, string> = { g: LIME, r: RED, c: "#00ffff" };

const Candles = () => (
  <>
    {candles.map(({ kind, levels: [hi, a, b, lo] }, i) => (
      <g key={i} fill={tone[kind]}>
        <rect x={i * BAR} y={hi} width="1" height={Math.max(1, lo - hi)} />
        <rect x={i * BAR - 2} y={a} width="5" height={Math.max(1, b - a)} />
      </g>
    ))}
  </>
);

const volumes = [
  1, 13, 8, 13, 11, 13, 10, 13, 11, 15, 13, 11, 13, 14, 13, 16, 14, 16, 11, 14, 14, 15, 18, 28, 12, 16, 15, 16, 15,
  15, 9, 1, 19, 11, 19, 14, 14, 11, 15, 22, 21, 20, 23, 13, 15, 14, 15, 18, 21, 11, 15, 18, 19, 25, 22, 11, 14, 15,
  16, 18, 15, 8, 3, 20, 14, 25, 35, 37, 16, 13, 9, 15, 16, 16, 11, 11, 10, 16, 19, 16, 11, 15, 13, 18, 20, 15, 7, 11,
  9, 13, 11, 9, 9, 1, 15, 9, 11, 11, 13, 9, 13, 10, 16, 16, 19, 12, 19, 14, 19, 16, 23, 23, 20, 18, 20, 20, 22, 15,
  13, 12, 11, 15, 16, 11, 1, 23, 21, 17, 19, 21, 16, 16, 15, 19, 21, 22, 15, 16, 15, 19, 20, 25, 14, 14, 11, 18, 36,
  23, 19, 18, 16, 19,
];
const buyTips = new Set([17, 22, 24, 25, 37, 40, 45, 61, 75, 104, 105, 108, 127]);

const axisPrices = Array.from({ length: 23 }, (_, i) => (66.85 - i * 0.2).toFixed(2));
const dates = [
  "3 Apr 2011", "5 Apr 04:00", "6 Apr 12:00", "7 Apr 20:00", "11 Apr 00:00", "12 Apr 08:00", "13 Apr 16:00",
  "15 Apr 00:00", "18 Apr 04:00", "19 Apr 12:00", "20 Apr 20:00", "22 Apr 04:00", "25 Apr 08:00", "26 Apr 16:00",
  "28 Apr 00:00", "29 Apr 08:00", "2 May 12:00", "3 May 20:00", "5 May 04:00",
];

/* ---------- chart tabs and status bar ---------- */

const ChartTabs = styled.div`
  height: 20px;
  display: flex;
  align-items: flex-start;
  padding-left: 2px;
  border-top: 1px solid #000;
  border-bottom: 1px solid #fff;
  font: 400 11px/14px ${COND};
  overflow: hidden;
`;
const ChartTab = styled.button<{ $w: number; $active?: boolean }>`
  flex: none;
  width: ${(p) => p.$w}px;
  height: 18px;
  padding-bottom: 2px;
  text-align: center;
  color: #707070;
  ${(p) =>
    p.$active
      ? css`
          padding-bottom: 1px;
          color: #000;
          background: #fff;
          border: solid #000;
          border-width: 0 1px 1px 1px;
        `
      : css`
          background: linear-gradient(#707070, #707070) 100% 50% / 1px 13px no-repeat;
        `}
`;
const TabArrows = styled.div`
  margin-left: auto;
  display: flex;
  gap: 12px;
  padding: 5px 8px 0 0;
`;
const chartTabs: [string, number][] = [
  ["USDCHF,H1", 80], ["EURGBP,M1", 80], ["NZDUSD,H4", 80], ["GBPUSD,H4", 80], ["EURJPY,Daily", 88],
  ["AUDJPY,Daily", 88], ["GBPJPY,H4", 76], ["NZDJPY,H4", 76], ["GBPCHF,H4", 80], ["CHFJPY,H4", 76],
  ["EURCHF,H4", 80], ["EURUSD,H1", 80], ["AUDUSD,H1", 80], ["USDJPY,H4", 76], ["GBPUSD,M15", 84],
  ["EURJPY,M15", 84], ["GOLD,M15", 72], ["SILVER,M1", 76], ["EUROGOLD,H1", 96],
];

const StatusBar = styled.footer`
  position: relative;
  height: 23px;
  display: flex;
  align-items: center;
  font: 400 11px/18px ${UI};
`;
const StatusPane = styled.div<{ $w?: number }>`
  ${(p) => (p.$w ? css`flex: none; width: ${p.$w}px; border-left: 1px solid ${SHADE};` : css`flex: 1;`)}
  height: 18px;
  display: flex;
  align-items: center;
  gap: 28px;
  padding-left: ${(p) => (p.$w ? 5 : 2)}px;
`;
const SizeGrip = styled.svg`
  position: absolute;
  right: 0;
  bottom: 0;
`;

const frames = ["M1", "M5", "M15", "M30", "H1", "H4", "D1", "W1", "MN"];
const menus = ["File", "View", "Insert", "Charts", "Tools", "Window", "Help"];

export default function App() {
  return (
    <>
      <GlobalStyle />
      <Screen>
        <AppWindow>
          <TitleBar>
            <svg width="19" height="18" viewBox="0 0 19 18" aria-hidden="true">
              <rect x=".5" y=".5" width="18" height="17" rx="2" fill="#f4f8fc" stroke="#5a7a9c" />
              <path d="M2 14L4.500 9l2-2 1 2 4-6 1.500 3 2-2 1.500 2v4l-2 2-2-1-3 4-2-3-3 4z" fill="#3d6ea6" />
              <path d="M2 15l5-5 2 2 3-5 2 3 3-3" fill="none" stroke="#b4d0ea" />
            </svg>
            <TitleText>25244: MetaTrader - ActivTrades - [EUROGOLD,H1]</TitleText>
            <Captions>
              <Caption $w={35} aria-label="Minimize">
                <svg width="17" height="12" viewBox="0 0 17 12">
                  <rect x=".5" y="6.500" width="16" height="4" fill="#fff" stroke="#444" />
                </svg>
              </Caption>
              <Caption $w={34} aria-label="Maximize">
                <svg width="15" height="12" viewBox="0 0 15 12">
                  <path d="M.5 0v10.500h14V0" fill="#f4f4f4" stroke="#444" />
                  <rect x="4.500" y="2.500" width="6" height="4" fill="#9fb0bf" stroke="#444" />
                </svg>
              </Caption>
              <Caption $w={58} $close aria-label="Close">
                <svg width="16" height="12" viewBox="0 0 16 12">
                  <path d="M1.500 0h4L8 3l2.500-3h4L10.500 5.500l4.500 5.500h-4.500L8 8l-2.500 3H1L5.500 5.500z" fill="#fff" stroke="#444" />
                </svg>
              </Caption>
            </Captions>
          </TitleBar>

          <MenuBar>
            <svg width="20" height="20" viewBox="0 0 20 20" aria-hidden="true">
              <rect x="1.500" y="1.500" width="13" height="12" fill="#eef6fd" stroke="#5a98cc" />
              <path d="M1 2.500h14" stroke="#6aa8e0" strokeWidth="3" />
              <path d="M4.500 5v6M3 6.500h2M9.500 5v6" stroke="#5a98cc" />
              <rect x="6.500" y="8.500" width="12" height="10" fill="#f6faff" stroke="#4a80c0" />
              <path d="M6 9h13" stroke="#6aa8e8" strokeWidth="2" />
              <path d="M8 12.500l2 4 2-4 2 4 3-4" stroke="#5a88c0" fill="none" />
            </svg>
            {menus.map((m) => (
              <MenuItem key={m}>{m}</MenuItem>
            ))}
            <MdiButtons>
              <MdiButton aria-label="Minimize chart">
                <svg width="8" height="8" viewBox="0 0 8 8"><path d="M1 7h6" stroke="#5a6b80" strokeWidth="2" /></svg>
              </MdiButton>
              <MdiButton aria-label="Restore chart">
                <svg width="9" height="9" viewBox="0 0 9 9" fill="none" stroke="#5a6b80">
                  <path d="M2.500 3V.5h6v4H6.500M3 1.500h5M.5 3.500h5v5h-5zM1 4.500h4" />
                </svg>
              </MdiButton>
              <MdiButton aria-label="Close chart">
                <svg width="8" height="8" viewBox="0 0 8 8"><path d="M1 1l6 6M7 1L1 7" stroke="#5a6b80" strokeWidth="2" /></svg>
              </MdiButton>
            </MdiButtons>
          </MenuBar>

          <ToolBar>
            <ToolGroup $w={493}>
              <Grip />
              <ToolButton icon="newChart" label="New chart" menu />
              <ToolButton icon="profiles" label="Profiles" menu />
              <Divider />
              <ToolButton icon="marketWatch" label="Market Watch" pressed />
              <ToolButton icon="dataWindow" label="Data Window" />
              <ToolButton icon="navigator" label="Navigator" />
              <ToolButton icon="terminal" label="Terminal" />
              <ToolButton icon="tester" label="Strategy Tester" />
              <Divider />
              <TextTool $w={86}>{icons.newOrder}New Order</TextTool>
              <ToolButton icon="metaEditor" label="MetaEditor" />
              <TextTool $w={110}>{icons.expert}Expert Advisors</TextTool>
            </ToolGroup>
            <ToolGroup $left>
              <Grip />
              <ToolButton icon="bars" label="Bar chart" />
              <ToolButton icon="candles" label="Candlesticks" pressed />
              <ToolButton icon="line" label="Line chart" />
              <Divider />
              <ToolButton icon="zoomIn" label="Zoom in" />
              <ToolButton icon="zoomOut" label="Zoom out" />
              <Divider />
              <ToolButton icon="autoScroll" label="Auto scroll" pressed />
              <ToolButton icon="chartShift" label="Chart shift" pressed />
              <Divider />
              <ToolButton icon="indicators" label="Indicators" menu />
              <ToolButton icon="periods" label="Periods" menu />
              <ToolButton icon="templates" label="Templates" menu />
            </ToolGroup>
            <ToolGroup>
              <Grip />
              <ToolButton icon="cursor" label="Cursor" pressed />
              <ToolButton icon="crosshair" label="Crosshair" />
              <Divider />
              <ToolButton icon="vline" label="Vertical line" />
              <ToolButton icon="hline" label="Horizontal line" />
              <ToolButton icon="trend" label="Trendline" />
              <ToolButton icon="channel" label="Equidistant channel" />
              <ToolButton icon="fibo" label="Fibonacci retracement" />
              <ToolButton icon="text" label="Text" />
              <ToolButton icon="label" label="Text label" />
              <ToolButton icon="arrows" label="Arrows" menu />
            </ToolGroup>
            <ToolGroup>
              <Grip />
              {frames.map((f) => (
                <Tool key={f} $pressed={f === "H4"}>
                  {f}
                </Tool>
              ))}
            </ToolGroup>
          </ToolBar>

          <Workspace>
            <MarketPanel>
              <PanelTitle>
                <PanelName>Market Watch: 11:14:06</PanelName>
                <PanelClose aria-label="Close panel">
                  <svg width="7" height="7" viewBox="0 0 7 7"><path d="M1 1l5 5M6 1L1 6" stroke="#000" strokeWidth="1.700" /></svg>
                </PanelClose>
              </PanelTitle>
              <ListBox>
                <Quotes>
                  <thead>
                    <tr>
                      <HeadCell $w={134}>Symbol</HeadCell>
                      <HeadCell $w={91} $right>Bid</HeadCell>
                      <HeadCell $w={92} $right>Ask</HeadCell>
                    </tr>
                  </thead>
                  <tbody>
                    {quotes.map(([name, bid, ask, up]) => (
                      <QuoteRow key={name} $up={up} $selected={name === "EUROGOLD"}>
                        <SymbolCell scope="row">
                          <SymbolName>
                            <DirectionIcon up={up} />
                            {name}
                          </SymbolName>
                        </SymbolCell>
                        <PriceCell>{bid}</PriceCell>
                        <PriceCell>{ask}</PriceCell>
                      </QuoteRow>
                    ))}
                  </tbody>
                </Quotes>
                <ScrollBar>
                  <ScrollArrow $h={41} aria-label="Scroll up">
                    <svg width="9" height="5" viewBox="0 0 9 5"><path d="M0 5l4.500-5L9 5z" fill="#444" /></svg>
                  </ScrollArrow>
                  <Thumb>
                    <svg width="8" height="8" viewBox="0 0 8 8"><path d="M0 .5h8M0 3.500h8M0 6.500h8" stroke="#555" /></svg>
                  </Thumb>
                  <ScrollArrow $h={23} $down aria-label="Scroll down">
                    <svg width="9" height="5" viewBox="0 0 9 5"><path d="M0 0l4.500 5L9 0z" fill="#444" /></svg>
                  </ScrollArrow>
                </ScrollBar>
              </ListBox>
              <SheetTabs>
                <SheetTab $active>Symbols</SheetTab>
                <SheetTab>Tick Chart</SheetTab>
              </SheetTabs>
            </MarketPanel>

            <ChartColumn>
              <ChartWindow>
                <Plot>
                  <Drawing shapeRendering="crispEdges">
                    <path d="M1 248.500H4000" stroke="#32cd32" strokeDasharray="9 6 3 6" />
                    <path d="M0 713.500H4000" stroke="#778899" />
                    <Candles />
                    <path d="M569 485L1527 164M864 106L1527 570" stroke="#0000cd" fill="none" />
                    <path d="M1215 0h10l-5 5z" fill="#778899" />
                    <Small x="4" y="11" xmlSpace="preserve">NZDJPY,H4  63.34 63.54 63.10 63.30</Small>
                    <Small x="5" y="246">#12691657 sell</Small>
                    <Countdown x="1227" y="727">&lt;--46:33</Countdown>
                  </Drawing>
                  <Panel>
                    <Frames>
                      {frames.slice(0, 7).map((f) => (
                        <span key={f}>{f}</span>
                      ))}
                    </Frames>
                    <Heat>
                      <HeatNames>
                        <span>MACD</span>
                        <span>STR</span>
                        <span>EMA</span>
                      </HeatNames>
                      <HeatCells>
                        {heat.flat().map((c, i) => (
                          <Cell key={i} $c={c} />
                        ))}
                      </HeatCells>
                    </Heat>
                    <BigPrice>63.30</BigPrice>
                    <Stats>
                      <StatName>Spread</StatName>
                      <StatValue $c="#ffd700">6</StatValue>
                      <StatName>Pips to Open</StatName>
                      <StatValue $c={LIME}>8</StatValue>
                      <StatName>Hi to Low</StatName>
                      <StatValue $c="#ffd700">55</StatValue>
                      <StatName>Daily Av</StatName>
                      <StatValue $c="#ff4500">102</StatValue>
                    </Stats>
                  </Panel>
                </Plot>
                <PriceAxis>
                  {axisPrices.map((p) => (
                    <AxisLabel key={p}>{p}</AxisLabel>
                  ))}
                  <PriceBadge>63.30</PriceBadge>
                </PriceAxis>
                <Plot>
                  <Drawing shapeRendering="crispEdges">
                    {volumes.map((v, i) => (
                      <g key={i}>
                        <rect x={i * BAR} y={39 - v} width="1" height={v} fill={i === 112 || i === 133 ? "#555" : RED} />
                        {buyTips.has(i) && <rect x={i * BAR} y={39 - v} width="1" height="2" fill="#1e90ff" />}
                      </g>
                    ))}
                    <Small x="4" y="13">TicksVolume(NZDJPY) 1741.5000 1745.5000</Small>
                    <Bold x="5" y="26">BUY VOLUME : 1741</Bold>
                    <Bold x="5" y="36">SELL VOLUME: 1746</Bold>
                  </Drawing>
                </Plot>
                <VolumeAxis>
                  <span>3679.2</span>
                  <span>0</span>
                </VolumeAxis>
                <DateAxis>
                  {dates.map((d) => (
                    <DateLabel key={d}>{d}</DateLabel>
                  ))}
                </DateAxis>
              </ChartWindow>
              <ChartTabs>
                {chartTabs.map(([name, w]) => (
                  <ChartTab key={name} $w={w} $active={name === "NZDJPY,H4"}>
                    {name}
                  </ChartTab>
                ))}
                <TabArrows>
                  <svg width="4" height="8" viewBox="0 0 4 8"><path d="M4 0v8L0 4z" fill="#909090" /></svg>
                  <svg width="4" height="8" viewBox="0 0 4 8"><path d="M0 0v8l4-4z" fill="#000" /></svg>
                </TabArrows>
              </ChartTabs>
            </ChartColumn>
          </Workspace>

          <StatusBar>
            <StatusPane>For Help, press F1</StatusPane>
            <StatusPane $w={149}>Default</StatusPane>
            <StatusPane $w={131} />
            <StatusPane $w={89} />
            <StatusPane $w={88} />
            <StatusPane $w={85} />
            <StatusPane $w={87} />
            <StatusPane $w={84} />
            <StatusPane $w={163}>
              <svg width="24" height="14" viewBox="0 0 24 14" aria-hidden="true">
                {[0, 1, 2, 3, 4, 5, 6, 7].map((i) => (
                  <g key={i}>
                    <rect x={i * 3} y="0" width="2" height={11 - i} fill="#8a5a14" />
                    <rect x={i * 3} y={12 - i} width="2" height={2 + i} fill="#143c8c" />
                  </g>
                ))}
              </svg>
              4122/37 kb
            </StatusPane>
            <SizeGrip width="16" height="16" viewBox="0 0 16 16" stroke="#9a9a9a" aria-hidden="true">
              <path d="M1 16L16 1M5 16L16 5M9 16L16 9M13 16L16 13" />
            </SizeGrip>
          </StatusBar>
        </AppWindow>
      </Screen>
    </>
  );
}
